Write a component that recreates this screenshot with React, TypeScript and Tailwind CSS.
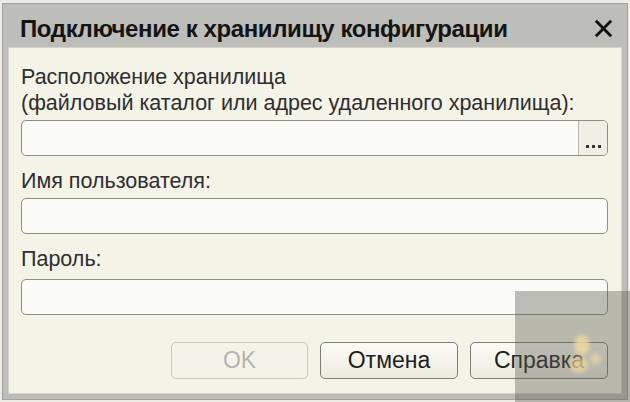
import React from 'react';

function Field({ browse }: { browse?: boolean }) {
    return (
        <div className="h-[36px] flex rounded-[5px] border border-[#8e8e86] bg-[#fbfbf8] overflow-hidden">
            <div className="flex-1" />
            {browse && (
                <div className="w-[29px] border-l border-[#b4b4aa] bg-[#f0efe6] flex items-end justify-center pb-[7px] gap-[3px]">
                    <span className="w-[3px] h-[3px] bg-[#333]" />
                    <span className="w-[3px] h-[3px] bg-[#333]" />
                    <span className="w-[3px] h-[3px] bg-[#333]" />
                </div>
            )}
        </div>
    );
}

function Btn({ label, disabled }: { label: string; disabled?: boolean }) {
    return (
        <div
            className={
                disabled
                    ? 'w-[137px] h-[37px] rounded-[5px] border border-[#c9c9c0] bg-[#f4f3ea] text-[#b4b4ac] flex items-center justify-center'
                    : 'w-[138px] h-[37px] rounded-[5px] border border-[#7e7e76] bg-gradient-to-b from-[#fbfbf6] to-[#ecebe0] text-[#1e1e1e] flex items-center justify-center'
            }
        >
            <span className="text-[23px] leading-none">{label}</span>
        </div>
    );
}

export default function App() {
    return (
        <div className="w-[630px] h-[402px] bg-[#ecebe4] pt-[3px] px-[2px] pb-[2px] overflow-hidden" style={{ fontFamily: '"Liberation Sans", Arial, sans-serif' }}>
            <div className="h-full bg-[#bdbdb9] border border-[#a2a29e] flex flex-col px-[5px] pb-[5px] relative">
                <div className="h-[43px] flex items-center justify-between pt-[6px] pl-[12px] pr-[9px] shrink-0">
                    <span className="text-[24px] font-bold text-[#141414] tracking-[-0.4px]">Подключение к хранилищу конфигурации</span>
                    <svg width="19" height="19" viewBox="0 0 20 20">
                        <path d="M3 3 L17 17 M17 3 L3 17" stroke="#111" strokeWidth="3" strokeLinecap="square" />
                    </svg>
                </div>
                <div className="flex-1 bg-[#f4f3e8] border border-[#d6d5cc] pl-[12px] pr-[13px] pt-[16px] flex flex-col text-[#2e2e2e]">
                    <div className="text-[21.5px] leading-[26px]">
                        <div>Расположение хранилища</div>
                        <div>(файловый каталог или адрес удаленного хранилища):</div>
                    </div>
                    <div className="mt-[4px]">
                        <Field browse />
                    </div>
                    <div className="text-[21.5px] leading-[26px] mt-[12px]">Имя пользователя:</div>
                    <div className="mt-[4px]">
                        <Field />
                    </div>
                    <div className="text-[21.5px] leading-[26px] mt-[12px]">Пароль:</div>
                    <div className="mt-[7px]">
                        <Field />
                    </div>
                    <div className="flex justify-end gap-[12px] mt-[27px]">
                        <Btn label="OK" disabled />
                        <Btn label="Отмена" />
                        <Btn label="Справка" />
                    </div>
                </div>
                <div className="absolute left-[512px] top-[287px] w-[120px] h-[120px] bg-[#5f5f55]/40">
                    <div className="absolute left-[60px] top-[44px] w-[14px] h-[20px] rounded-full bg-[#f1dca0]/80 blur-[2px]" />
                    <div className="absolute left-[55px] top-[66px] w-[18px] h-[16px] rounded-full bg-[#f1dca0]/70 blur-[2px]" />
                    <div className="absolute left-[75px] top-[62px] w-[11px] h-[12px] rounded-full bg-[#f1dca0]/60 blur-[2px]" />
                </div>
            </div>
        </div>
    );
}
